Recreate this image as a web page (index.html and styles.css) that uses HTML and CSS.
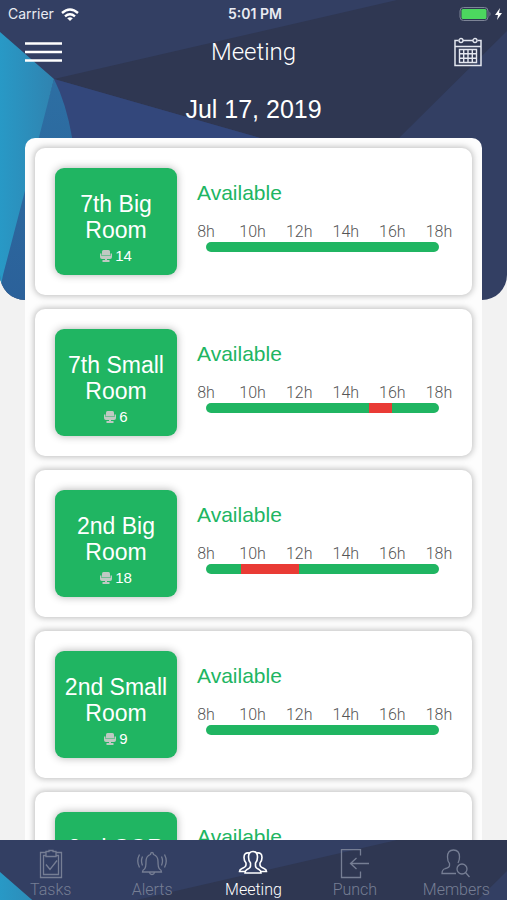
FILE: index.html
```html
<!DOCTYPE html>
<html lang="en">
<head>
    <meta charset="UTF-8">
    <meta name="viewport" content="width=device-width, initial-scale=1.0">
    <title>Meeting</title>
    <link rel="stylesheet" href="styles.css">
</head>
<body>
    <!-- Shared shapes -->
    <svg class="defs" aria-hidden="true">
        <defs>
            <linearGradient id="cyan" x1="0" y1="0" x2="1" y2="0">
                <stop offset="0" stop-color="#2899c6"/>
                <stop offset="1" stop-color="#3083b0"/>
            </linearGradient>
            <linearGradient id="steel" x1="0" y1="0" x2="0" y2="1">
                <stop offset="0" stop-color="#2d6fa3"/>
                <stop offset="1" stop-color="#2b619a"/>
            </linearGradient>
            <g id="facets">
                <rect width="507" height="300" fill="#333f63"/>
                <path d="M54 79L397 0H507V31L400 137 380 180 257 137z" fill="#2f3752"/>
                <path d="M54 79L257 137 330 160V300H90L72 137z" fill="#33477b"/>
                <path d="M54 79Q66 103 72 137L90 300H0V270z" fill="url(#steel)"/>
                <path d="M0 32L54 79 39 137 3 275 0 290z" fill="url(#cyan)"/>
            </g>
            <g id="chair" fill="#bfc9c3">
                <path d="M3.500 0h5q1.500 0 1.500 1.500V5.500H2V1.500Q2 0 3.500 0z"/>
                <path d="M0 3.500h1.500V6h9V3.500H12V7q0 2-2 2H2q-2 0-2-2z"/>
                <path d="M5 9h2v1h2.500v2h-7v-2H5z"/>
            </g>
        </defs>
    </svg>

    <svg class="backdrop" viewBox="0 0 507 300" preserveAspectRatio="none" aria-hidden="true"><use href="#facets"/></svg>

    <!-- Status bar -->
    <div class="status">
        <div class="carrier">
            <span>Carrier</span>
            <svg width="18" height="13" viewBox="0 0 18 13" fill="none" stroke="#fff" stroke-width="2.400">
                <path d="M1 5Q9-2 17 5M4 8.300q5-4.300 10 0"/>
                <path d="M9 13L6.200 10.300Q9 8.200 11.800 10.300z" fill="#fff" stroke="none"/>
            </svg>
        </div>
        <div class="clock">5:01 PM</div>
        <div class="battery">
            <svg width="43" height="16" viewBox="0 0 43 16">
                <rect x="1" y="1.500" width="28" height="13" rx="3.500" fill="none" stroke="#7d8497"/>
                <rect x="2.500" y="3" width="25" height="10" rx="1.500" fill="#4cd75f"/>
                <path d="M30.500 5.500q2 2.500 0 5z" fill="#7d8497"/>
                <path d="M41 2l-5 7h3l-1 5 5-7h-3z" fill="#fff"/>
            </svg>
        </div>
    </div>

    <!-- Title bar -->
    <header class="nav">
        <button class="icon-btn" type="button" aria-label="Menu">
            <svg width="38" height="22" viewBox="0 0 38 22" stroke="#fff" stroke-width="2.400">
                <path d="M0 2.500h37M0 11h37M0 19.500h37"/>
            </svg>
        </button>
        <h1>Meeting</h1>
        <button class="icon-btn" type="button" aria-label="Calendar">
            <svg width="28" height="30" viewBox="0 0 28 30" fill="none" stroke="#e4e7f0">
                <path d="M4.500 3.500H1V28.500H27V3.500H23.500M9 3.500h10M1 9.500h26" stroke-width="1.500"/>
                <circle cx="7" cy="3.500" r="2" stroke-width="1.300"/>
                <circle cx="21" cy="3.500" r="2" stroke-width="1.300"/>
                <path d="M5.500 12.500h17v13h-17zM9.700 12.500v13M14 12.500v13M18.300 12.500v13M5.500 16.800h17M5.500 21.200h17" stroke-width="1.400"/>
            </svg>
        </button>
    </header>

    <h2 class="date">Jul 17, 2019</h2>

    <!-- Rooms -->
    <main class="rooms">
        <section class="room">
            <div class="tile">
                <h3>7th Big Room</h3>
                <p class="seats"><svg width="12" height="12"><use href="#chair"/></svg>14</p>
            </div>
            <div class="schedule">
                <p class="state">Available</p>
                <ul class="hours"><li>8h</li><li>10h</li><li>12h</li><li>14h</li><li>16h</li><li>18h</li></ul>
                <div class="bar"></div>
            </div>
        </section>

        <section class="room">
            <div class="tile">
                <h3>7th Small Room</h3>
                <p class="seats"><svg width="12" height="12"><use href="#chair"/></svg>6</p>
            </div>
            <div class="schedule">
                <p class="state">Available</p>
                <ul class="hours"><li>8h</li><li>10h</li><li>12h</li><li>14h</li><li>16h</li><li>18h</li></ul>
                <div class="bar"><span style="width: 70%"></span><span class="busy" style="width: 10%"></span></div>
            </div>
        </section>

        <section class="room">
            <div class="tile">
                <h3>2nd Big Room</h3>
                <p class="seats"><svg width="12" height="12"><use href="#chair"/></svg>18</p>
            </div>
            <div class="schedule">
                <p class="state">Available</p>
                <ul class="hours"><li>8h</li><li>10h</li><li>12h</li><li>14h</li><li>16h</li><li>18h</li></ul>
                <div class="bar"><span style="width: 15%"></span><span class="busy" style="width: 25%"></span></div>
            </div>
        </section>

        <section class="room">
            <div class="tile">
                <h3>2nd Small Room</h3>
                <p class="seats"><svg width="12" height="12"><use href="#chair"/></svg>9</p>
            </div>
            <div class="schedule">
                <p class="state">Available</p>
                <ul class="hours"><li>8h</li><li>10h</li><li>12h</li><li>14h</li><li>16h</li><li>18h</li></ul>
                <div class="bar"></div>
            </div>
        </section>

        <section class="room">
            <div class="tile">
                <h3>2nd COR</h3>
            </div>
            <div class="schedule">
                <p class="state">Available</p>
            </div>
        </section>
    </main>

    <!-- Tab bar -->
    <nav class="tabs">
        <svg class="tabs-bg" viewBox="0 0 507 60" preserveAspectRatio="none" aria-hidden="true"><use href="#facets"/></svg>
        <a href="#tasks">
            <svg width="30" height="30" viewBox="0 0 30 30">
                <path d="M10 3.500H4.500V28.500H25.500V3.500H20M10 6.500H7.500V25.500H22.500V6.500H20M10 2.500h3v-1h4v1h3v5H10zM10 15.500l4 5 7-9"/>
            </svg>
            Tasks
        </a>
        <a href="#alerts">
            <svg width="30" height="30" viewBox="0 0 30 30">
                <path d="M13.500 5.500q0-2 1.500-2t1.500 2q4.500 1.500 4.500 7 0 6 1.500 7.500 2 1 2 3H5.500q0-2 2-3 1.500-1.500 1.500-7.500 0-5.500 4.500-7zM12.500 23.500q.5 2 2.500 2t2.500-2M5.500 7.500q-2 4.500 0 9M2.500 5.500q-3.500 6.500 0 13M24.500 7.500q2 4.500 0 9M27.500 5.500q3.500 6.500 0 13"/>
            </svg>
            Alerts
        </a>
        <a class="active" href="#meeting">
            <svg width="30" height="30" viewBox="0 0 30 30">
                <path d="M15 2.500q4.500 0 4.500 5.500 0 4-2 6v3q0 2 3.500 3.500 2 1 2 3.500H7q0-2.500 2-3.500 3.500-1.500 3.500-3.500v-3q-2-2-2-6 0-5.500 4.500-5.500z"/>
                <path d="M11.500 4Q6 3 6 8.500q0 3.500 2 5.500v2q0 2-4 3.500-2.500 1-2.500 3H7M18.500 4Q24 3 24 8.500q0 3.500-2 5.500v2q0 2 4 3.500 2.500 1 2.500 3H23"/>
            </svg>
            Meeting
        </a>
        <a href="#punch">
            <svg width="30" height="30" viewBox="0 0 30 30">
                <path d="M20.500 6.500V.7H1.500V28.500H20.500V22.500M29 14.500H11M16.500 9l-6 5.500 6 5.500"/>
            </svg>
            Punch
        </a>
        <a href="#members">
            <svg width="30" height="30" viewBox="0 0 30 30">
                <path d="M15 24.500H1q0-4 3.500-5 4-1 4-3v-2q-2-2-2-6.500Q6.500 1 12.500 1t6 7q0 3.500-1.500 6M28.500 28l-4-4.500"/>
                <circle cx="21" cy="20" r="5"/>
            </svg>
            Members
        </a>
    </nav>
</body>
</html>
```
FILE: styles.css
```css
* {
    box-sizing: border-box;
    margin: 0;
    padding: 0;
}
body {
    position: relative;
    display: flex;
    flex-direction: column;
    height: 100vh;
    overflow: hidden;
    background: #f2f2f2;
    color: #fff;
    font-family: "Liberation Sans", Arial, sans-serif;
}
.defs {
    position: absolute;
    width: 0;
    height: 0;
}
.backdrop {
    position: absolute;
    z-index: -1;
    top: 0;
    left: 0;
    width: 100%;
    height: 300px;
    border-radius: 0 0 25px 25px;
}

/* status bar */
.status {
    display: grid;
    grid-template-columns: 1fr auto 1fr;
    align-items: center;
    height: 28px;
    padding: 0 5px 0 8px;
    font: 14px/28px Inter, sans-serif;
    color: #e9ebf2;
}
.carrier {
    display: flex;
    align-items: center;
    gap: 7px;
}
.clock {
    font-weight: 600;
}
.battery {
    display: flex;
    justify-content: flex-end;
}

/* title bar */
.nav {
    display: flex;
    justify-content: space-between;
    align-items: center;
    height: 48px;
    padding: 0 25px;
}
.nav h1 {
    font: 300 24px/32px Roboto, sans-serif;
}
.icon-btn {
    display: flex;
    align-items: center;
    width: 38px;
    height: 32px;
    border: none;
    background: none;
    cursor: pointer;
}
.icon-btn:last-child {
    justify-content: flex-end;
}
.date {
    padding: 17px 0 13px;
    font-size: 25px;
    font-weight: normal;
    line-height: 32px;
    text-align: center;
}

/* rooms */
.rooms {
    flex: 1;
    display: flex;
    flex-direction: column;
    gap: 14px;
    min-height: 0;
    margin: 0 25px;
    padding: 10px;
    overflow: hidden;
    border-radius: 10px 10px 0 0;
    background: #fdfdfd;
}
.room {
    flex: none;
    display: flex;
    gap: 20px;
    padding: 20px 24px 20px 20px;
    border-radius: 10px;
    background: #fff;
    box-shadow: 0 0 6px 1px rgba(0, 0, 0, 0.25);
}
.tile {
    flex: none;
    width: 122px;
    height: 107px;
    padding-top: 23px;
    border-radius: 9px;
    background: #20b562;
    box-shadow: 0 0 8px rgba(0, 0, 0, 0.3);
    text-align: center;
}
.tile h3 {
    padding: 0 8px;
    font-size: 23px;
    font-weight: normal;
    line-height: 26px;
}
.seats {
    display: flex;
    justify-content: center;
    align-items: center;
    gap: 3px;
    font-size: 15px;
    line-height: 26px;
}
.schedule {
    flex: 1;
    padding-top: 12px;
}
.state {
    margin-bottom: 16px;
    color: #20b562;
    font-size: 21px;
    line-height: 26px;
}
.hours {
    display: flex;
    justify-content: space-between;
    list-style: none;
    color: #555;
    font: 300 16px/20px Roboto, sans-serif;
}
/* narrow cells keep each label centred on its mark */
.hours li {
    display: flex;
    justify-content: center;
    width: 18px;
}
.bar {
    display: flex;
    height: 10px;
    margin: 0 9px;
    overflow: hidden;
    border-radius: 5px;
    background: #20b562;
}
.busy {
    background: #e93b35;
}

/* tab bar */
.tabs {
    position: relative;
    flex: none;
    display: grid;
    grid-template-columns: repeat(5, 1fr);
    height: 60px;
}
.tabs-bg {
    position: absolute;
    z-index: -1;
    width: 100%;
    height: 60px;
}
.tabs a {
    display: flex;
    flex-direction: column;
    align-items: center;
    padding-top: 9px;
    color: #767e94;
    font: 300 16px/22px Roboto, sans-serif;
    text-decoration: none;
}
.tabs a svg {
    fill: none;
    stroke: currentColor;
    stroke-width: 1.3;
}
.tabs a.active {
    color: #fff;
}
.tabs a.active svg {
    stroke-width: 1.6;
}
```
